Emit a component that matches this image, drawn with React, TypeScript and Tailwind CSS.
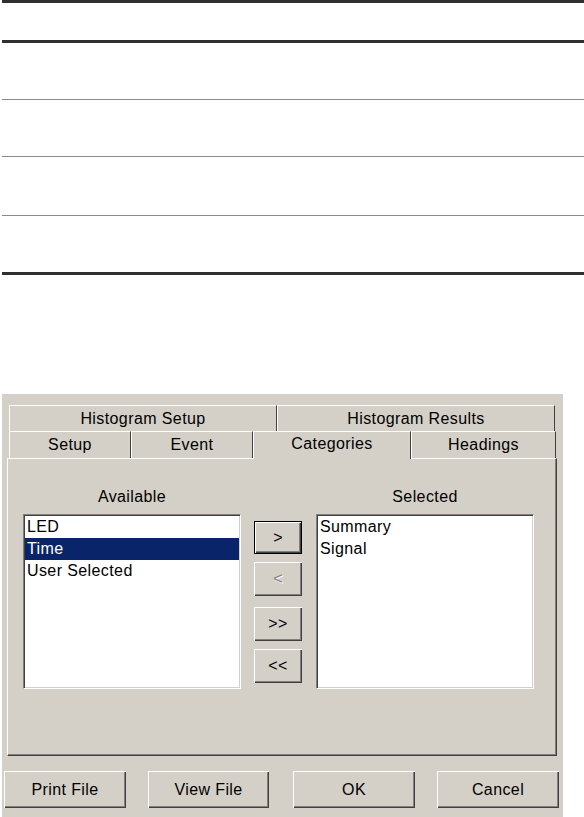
import React from "react";

const raised =
  "shadow-[inset_1px_1px_0_#ffffff,inset_-1px_-1px_0_#404040,inset_-2px_-2px_0_#808080]";

function Btn({
  children,
  className = "",
  disabled = false,
  isDefault = false,
}: {
  children: React.ReactNode;
  className?: string;
  disabled?: boolean;
  isDefault?: boolean;
}) {
  return (
    <div
      className={`flex items-center justify-center bg-[#d4d0c8] ${raised} ${
        isDefault ? "border border-black" : ""
      } ${disabled ? "text-[#808080] [text-shadow:1px_1px_0_#ffffff]" : "text-black"} ${className}`}
    >
      {children}
    </div>
  );
}

function ListBox({
  items,
  selected,
}: {
  items: string[];
  selected?: number;
}) {
  return (
    <div className="w-[218px] h-[175px] bg-white border border-t-[#808080] border-l-[#808080] border-r-white border-b-white shadow-[inset_1px_1px_0_#404040,inset_-1px_-1px_0_#d4d0c8] p-[1px]">
      <div className="flex flex-col">
        {items.map((it, i) => (
          <div
            key={it}
            className={`h-[22px] leading-[22px] pl-[2px] whitespace-nowrap ${
              i === selected ? "bg-[#0a246a] text-white" : "text-black"
            }`}
          >
            {it}
          </div>
        ))}
      </div>
    </div>
  );
}

function Tab({
  label,
  className = "",
}: {
  label: string;
  className?: string;
}) {
  return (
    <div
      className={`flex items-center justify-center border-t border-l border-t-white border-l-white border-r border-r-[#404040] ${className}`}
    >
      {label}
    </div>
  );
}

export default function App() {
  return (
    <div className="w-[584px] h-[817px] bg-white overflow-hidden font-['Liberation_Sans',Arial,sans-serif] text-[16px] tracking-[0.4px] text-black">
      {/* top ruled area */}
      <div className="ml-[2px] flex flex-col">
        <div className="h-[3px] bg-[#2f2f2f]" />
        <div className="h-[37px]" />
        <div className="h-[3px] bg-[#2f2f2f]" />
        <div className="h-[56px]" />
        <div className="h-[1px] bg-[#8a8a8a]" />
        <div className="h-[56px]" />
        <div className="h-[1px] bg-[#8a8a8a]" />
        <div className="h-[58px]" />
        <div className="h-[1px] bg-[#8a8a8a]" />
        <div className="h-[56px]" />
        <div className="h-[3px] bg-[#2f2f2f]" />
      </div>

      {/* dialog */}
      <div className="ml-[2px] mt-[119px] w-[561px] h-[423px] bg-[#d4d0c8] pl-[5px] pt-[11px]">
        {/* tab row 1 */}
        <div className="ml-[2px] flex h-[26px]">
          <Tab label="Histogram Setup" className="w-[268px]" />
          <Tab label="Histogram Results" className="w-[278px]" />
        </div>
        {/* tab row 2 */}
        <div className="ml-[2px] flex h-[27px] items-start">
          <Tab label="Setup" className="w-[122px] h-[27px]" />
          <Tab label="Event" className="w-[122px] h-[27px]" />
          <div className="relative z-10 w-[158px] h-[28px] -mb-[1px] bg-[#d4d0c8] flex items-center justify-center pb-[4px] border-t border-l border-t-white border-l-white border-r border-r-[#404040]">
            Categories
          </div>
          <Tab label="Headings" className="w-[145px] h-[27px]" />
        </div>

        {/* panel */}
        <div className="relative w-[550px] h-[298px] border border-t-white border-l-white border-r-[#404040] border-b-[#404040] shadow-[inset_-1px_-1px_0_#808080] pl-[15px] pt-[28px] flex">
          <div className="flex flex-col">
            <div className="h-[20px] leading-[20px] text-center">Available</div>
            <div className="mt-[7px]">
              <ListBox items={["LED", "Time", "User Selected"]} selected={1} />
            </div>
          </div>
          <div className="ml-[13px] flex flex-col pt-[34px]">
            <Btn isDefault className="w-[48px] h-[33px]">
              &gt;
            </Btn>
            <Btn disabled className="mt-[8px] w-[48px] h-[34px]">
              &lt;
            </Btn>
            <Btn className="mt-[11px] w-[48px] h-[34px]">&gt;&gt;</Btn>
            <Btn className="mt-[8px] w-[48px] h-[34px]">&lt;&lt;</Btn>
          </div>
          <div className="ml-[14px] flex flex-col">
            <div className="h-[20px] leading-[20px] text-center">Selected</div>
            <div className="mt-[7px]">
              <ListBox items={["Summary", "Signal"]} />
            </div>
          </div>
        </div>

        {/* bottom buttons */}
        <div className="mt-[15px] -ml-[3px] flex">
          <Btn className="w-[122px] h-[37px]">Print File</Btn>
          <Btn className="ml-[22px] w-[121px] h-[37px]">View File</Btn>
          <Btn className="ml-[24px] w-[122px] h-[37px]">OK</Btn>
          <Btn className="ml-[22px] w-[122px] h-[37px]">Cancel</Btn>
        </div>
      </div>
    </div>
  );
}
